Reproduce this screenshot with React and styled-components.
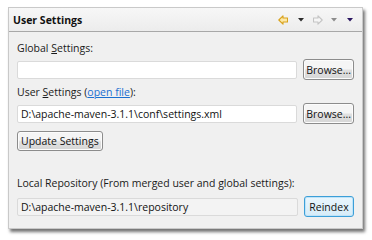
import React from 'react';
import styled, { createGlobalStyle } from 'styled-components';

const Global = createGlobalStyle`
  body {
    margin: 0;
    background: #ffffff;
    font-family: "Open Sans", "Noto Sans", sans-serif;
  }
`;

function Arrow({ dir, active, gap }) {
  const fill = active ? '#fde9a8' : '#f6f6f6';
  const stroke = active ? '#d9a21b' : '#c4c4c4';
  const d = 'M0.8 5 L5 0.8 L5 3 L9.5 3 L9.5 7 L5 7 L5 9.2 Z';
  return (
    <ArrowIcon width="10" height="10" viewBox="0 0 10 10" $flip={dir === 'right'} $gap={gap}>
      <path d={d} fill={fill} stroke={stroke} strokeWidth="1.1" strokeLinejoin="round" />
    </ArrowIcon>
  );
}

function Caret({ color, gap }) {
  return (
    <CaretIcon width="6" height="4" viewBox="0 0 6 4" $gap={gap}>
      <path d="M0 0 L6 0 L3 3.5 Z" fill={color} />
    </CaretIcon>
  );
}

export default function App() {
  return (
    <Page>
      <Global />
      <Panel>
        <Header>
          <Title>User Settings</Title>
          <Tools>
            <Arrow dir="left" active gap={0} />
            <Caret color="#2b2b2b" gap={10} />
            <Arrow dir="right" gap={9} />
            <Caret color="#8c8c8c" gap={8} />
            <Caret color="#2a1560" gap={10} />
          </Tools>
        </Header>
        <Body>
          <Label>Global <u>S</u>ettings:</Label>
          <Row>
            <Field value="" readOnly />
            <Button>Browse...</Button>
          </Row>
          <Label>User <u>S</u>ettings (<Link>open file</Link>):</Label>
          <Row>
            <Field value="D:\apache-maven-3.1.1\conf\settings.xml" readOnly />
            <Button>Browse...</Button>
          </Row>
          <UpdateRow>
            <Button $short>Update Settings</Button>
          </UpdateRow>
          <Label $top={24} $bottom={5}>Local Repository (From merged user and global settings):</Label>
          <Row>
            <Field value="D:\apache-maven-3.1.1\repository" readOnly $disabled />
            <Button $focused>Reindex</Button>
          </Row>
        </Body>
      </Panel>
    </Page>
  );
}

const Page = styled.div`
  width: 372px;
  height: 240px;
  padding: 7px 0 0 8px;
  box-sizing: border-box;
`;

const Panel = styled.div`
  width: 355px;
  height: 222px;
  background: #f0f0f0;
  border: 1px solid #c9c9c9;
  box-sizing: border-box;
  box-shadow: 2px 3px 3px rgba(0, 0, 0, 0.55);
  display: flex;
  flex-direction: column;
`;

const Header = styled.div`
  height: 24px;
  box-sizing: border-box;
  display: flex;
  align-items: center;
  justify-content: space-between;
  padding: 0 9px 0 4px;
  background: linear-gradient(#f7f7f7, #ececec);
  border-bottom: 1px solid #a8a8a8;
`;

const Title = styled.div`
  font-weight: 700;
  font-size: 10.5px;
  color: #111;
`;

const Tools = styled.div`
  display: flex;
  align-items: center;
`;

const ArrowIcon = styled.svg`
  display: block;
  margin-left: ${p => p.$gap}px;
  transform: ${p => (p.$flip ? 'scaleX(-1)' : 'none')};
`;

const CaretIcon = styled.svg`
  display: block;
  margin-left: ${p => p.$gap}px;
`;

const Body = styled.div`
  padding: 8px 8px 0 8px;
  display: flex;
  flex-direction: column;
`;

const Label = styled.div`
  font-size: 10.5px;
  color: #1a1a1a;
  height: 16px;
  line-height: 16px;
  margin-top: ${p => p.$top || 0}px;
  margin-bottom: ${p => (p.$bottom != null ? p.$bottom : 3)}px;
  u { text-decoration: underline; }
`;

const Link = styled.span`
  color: #1a6fd0;
  text-decoration: underline;
`;

const Row = styled.div`
  display: flex;
  align-items: center;
  gap: 6px;
  margin-bottom: 4px;
`;

const Field = styled.input`
  flex: 1;
  min-width: 0;
  height: 18px;
  box-sizing: border-box;
  border: 1px solid #dadada;
  border-radius: 2px;
  background: ${p => (p.$disabled ? '#f3f3f3' : '#ffffff')};
  font-family: inherit;
  font-size: 10.5px;
  color: #111;
  padding: 0 3px;
  outline: none;
`;

const Button = styled.button`
  height: ${p => (p.$short ? 20 : 21)}px;
  min-width: 50px;
  box-sizing: border-box;
  padding: 0 ${p => (p.$short ? 3 : 2)}px;
  font-family: inherit;
  font-size: 10.5px;
  color: #111;
  border: 1px solid ${p => (p.$focused ? '#3c9fd8' : '#8c8c8c')};
  border-radius: 3px;
  background: ${p => (p.$focused
    ? 'linear-gradient(#eaf6fd, #d6ecf8)'
    : 'linear-gradient(#f5f5f5 45%, #e0e0e0 55%, #d6d6d6)')};
  box-shadow: ${p => (p.$focused ? 'inset 0 0 0 1px #bfe3f8' : 'inset 0 0 0 1px #fcfcfc')};
`;

const UpdateRow = styled.div`
  display: flex;
  margin-top: 3px;
`;
